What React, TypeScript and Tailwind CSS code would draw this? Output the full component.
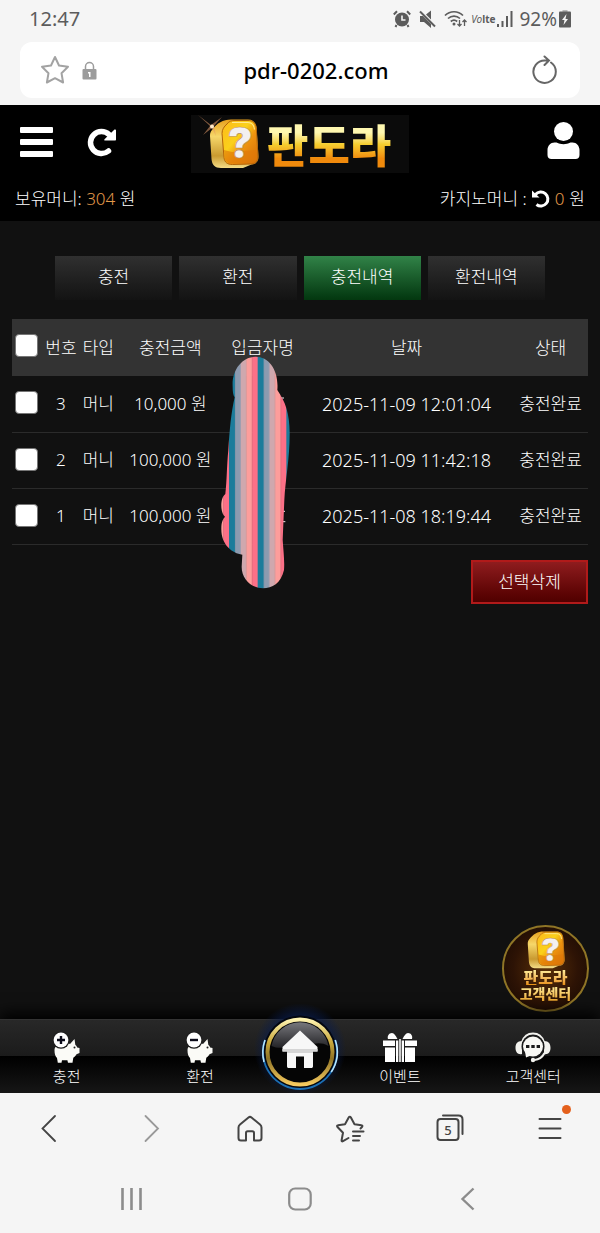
import React from 'react';

interface Deposit {
  no: number;
  type: string;
  amount: string;
  date: string;
  status: string;
}

interface NavItemProps {
  label: string;
  children: React.ReactNode;
}

const deposits: Deposit[] = [
  { no: 3, type: '머니', amount: '10,000 원', date: '2025-11-09 12:01:04', status: '충전완료' },
  { no: 2, type: '머니', amount: '100,000 원', date: '2025-11-09 11:42:18', status: '충전완료' },
  { no: 1, type: '머니', amount: '100,000 원', date: '2025-11-08 18:19:44', status: '충전완료' },
];

const tabs = ['충전', '환전', '충전내역', '환전내역'];
const activeTab = '충전내역';

const StatusIcons: React.FC = () => (
  <div className="flex items-center text-[#5c5c5c]">
    {/* alarm */}
    <svg className="mr-2 h-[18px] w-[18px]" viewBox="0 0 18 18" fill="currentColor" aria-hidden="true">
      <circle cx="9" cy="9.5" r="7" />
      <path d="M3.500 15l-1 2M14.500 15l1 2M.8 4.500L4 1.300M17.200 4.500L14 1.300" stroke="currentColor" strokeWidth="2" />
      <path d="M9 5.500V10h3.500" stroke="#f5f5f5" strokeWidth="1.600" fill="none" />
    </svg>
    {/* sound off */}
    <svg className="mr-2 h-[18px] w-[17px]" viewBox="0 0 17 18" fill="currentColor" aria-hidden="true">
      <path d="M1 6h3l8 8v4l-7-6H1zM7 4.500L12 .500v9z" />
      <path d="M1 1.500l15 15" stroke="currentColor" strokeWidth="2" />
    </svg>
    {/* wifi */}
    <svg className="mr-1 h-[18px] w-[23px]" viewBox="0 0 23 18" fill="none" stroke="currentColor" strokeWidth="1.700" aria-hidden="true">
      <path d="M1 5.500C6 .5 14 .5 19 5.500M4 8.500c3.500-3.300 8.500-3.300 12 0M6.800 11.500c2-1.800 4.400-1.800 6.400 0" />
      <circle cx="10" cy="14" r="1.500" fill="currentColor" stroke="none" />
      <path d="M15.500 10v6m-2-2l2 2 2-2M20.500 16v-6m-2 2l2-2 2 2" strokeWidth="1.300" />
    </svg>
    <span className="mr-0.5 text-[10px] leading-5">
      <i>Vo</i>
      <b>lte</b>
    </span>
    {/* signal */}
    <svg className="mr-1.5 h-[18px] w-4" viewBox="0 0 16 18" fill="currentColor" aria-hidden="true">
      <path d="M0 14h2v3H0zM4.500 11h2v6h-2zM9 6h2v11H9zM13.500 1h2v16h-2z" />
    </svg>
    <span className="text-[19px] leading-5">92%</span>
    {/* battery */}
    <svg className="ml-0.5 h-[18px] w-3" viewBox="0 0 12 18" fill="currentColor" aria-hidden="true">
      <path d="M3.500 0h5v2h-5z" opacity=".4" />
      <rect y="1.500" width="12" height="16" rx="1" />
      <path d="M7.500 4L3 10h2.500L4.500 15 9 9H6.500z" fill="#f5f5f5" />
    </svg>
  </div>
);

const GoldCube: React.FC<{ id: string; className?: string }> = ({ id, className = '' }) => (
  <svg className={`overflow-visible ${className}`} viewBox="0 0 50 50" aria-hidden="true">
    <defs>
      <linearGradient id={`${id}-side`} x1="0" y1="0" x2="0" y2="1">
        <stop offset="0" stopColor="#e8a01c" />
        <stop offset=".35" stopColor="#f6d76a" />
        <stop offset=".75" stopColor="#c99a30" />
        <stop offset="1" stopColor="#f4dc86" />
      </linearGradient>
      <linearGradient id={`${id}-face`} x1="0" y1="0" x2="1" y2="1">
        <stop offset="0" stopColor="#fdb91b" />
        <stop offset=".4" stopColor="#fbd11a" />
        <stop offset=".6" stopColor="#ee930f" />
        <stop offset="1" stopColor="#d06a08" />
      </linearGradient>
    </defs>
    <path d="M3 11C8 4 14 .5 22 .5h17c5 0 8 3 8.500 8l2 29c0 5-3 8-7 8L34 49H12c-6 0-9-3-9.500-9L1 17c0-3 .5-4 2-6z" fill={`url(#${id}-side)`} />
    <path d="M18 5c2-3 5-3.500 8-3.500h13c5 0 8 3 8.300 8l1.700 28c0 5-2.500 7.500-6.500 7.500l-19 .500c-5 0-8-2-8.500-7l-2-24c0-4 2-7 5-9.500z" fill={`url(#${id}-face)`} stroke="#b36408" strokeWidth="1" />
    <path d="M15 31l8 2 24-2 1 7c0 4-3 6-6 6l-18 .5c-5 0-8-2-8.500-6z" fill="#e07a08" opacity=".65" />
    <path d="M23 3.500h16c4 0 6 2.500 6.500 7" fill="none" stroke="#ffe98f" strokeWidth="1.200" />
    <text x="31" y="39" textAnchor="middle" fontFamily="Inter, sans-serif" fontWeight="900" fontSize="42" fill="#f3f0f0" stroke="#b98a5c" strokeWidth=".6">
      ?
    </text>
  </svg>
);

const PiggyIcon: React.FC<{ minus?: boolean }> = ({ minus }) => (
  <svg className="h-[31px] w-[27px]" viewBox="0 0 27 31" aria-hidden="true">
    <path d="M1.500 18c0-4 5-7 10-7 2 0 4 .3 5.500 1L21.500 7l.8 5.800c1 .8 1.500 1.700 1.900 2.700L26.500 16v5l-3 1.200c-.8 1.500-1.800 2.600-3.200 3.500l-.8 5H15l-.6-2.500H9L8.500 30.700H4.800L4 26c-1.800-1.800-2.500-4.500-2.500-8z" fill="#fbfbf7" />
    <circle cx="8" cy="8" r="8.700" fill="#1f1f1f" />
    <circle cx="8" cy="8" r="7.400" fill="#fff" />
    <path d={minus ? 'M4 8h8' : 'M4 8h8M8 4v8'} stroke="#0c0c1a" strokeWidth="2.400" />
    <circle cx="21.500" cy="15.500" r="1" fill="#222" />
  </svg>
);

const GiftIcon: React.FC = () => (
  <svg className="h-[31px] w-[34px]" viewBox="0 0 34 31" fill="#fff" aria-hidden="true">
    <path d="M5 7C4 4 6 1 9 1c2 0 4 3 5.500 6zM29 7c1-3-1-6-4-6-2 0-4 3-5.500 6zM0 8.500h12V14H0zM22 8.500h12V14H22zM2 15.500h10V30H2zM22 15.500h10V30H22zM13 8.500h2.300V30H13zM18.700 8.500H21V30h-2.300z" />
    <path d="M16 7h2v23h-2z" fill="#ccc" />
  </svg>
);

const SupportIcon: React.FC = () => (
  <svg className="h-[31px] w-9" viewBox="0 0 36 31" aria-hidden="true">
    <path d="M7 10C9 4 13 1.500 18 1.500S27 4 29 10" fill="none" stroke="#f2f2ee" strokeWidth="1.800" />
    <path d="M7 9C2 9 .5 12 .5 16S3 23 7 22zM29 9c5 0 6.500 3 6.500 7S33 23 29 22z" fill="#f2f2ee" />
    <circle cx="18" cy="14.500" r="11.500" fill="#1a1a1a" />
    <circle cx="18" cy="14.500" r="10" fill="#f8f8f4" />
    <path d="M10 19l1 6.500 7-3z" fill="#f8f8f4" />
    <path d="M29.500 21c-2 4-5 6.500-10 7" fill="none" stroke="#f2f2ee" strokeWidth="2" />
    <circle cx="18" cy="28" r="2.200" fill="#f2f2ee" />
    <path d="M11 13h3.400v3H11zM16.300 13h3.400v3h-3.400zM21.600 13H25v3h-3.400z" fill="#1a1a1a" />
  </svg>
);

const HomeMedal: React.FC = () => (
  <svg className="h-24 w-24" viewBox="0 0 96 96" aria-hidden="true">
    <defs>
      <radialGradient id="medal-glow">
        <stop offset=".6" stopColor="#0a1c4a" />
        <stop offset="1" stopColor="#0a1c4a" stopOpacity="0" />
      </radialGradient>
      <linearGradient id="medal-gold" x1="0" y1="0" x2="0" y2="1">
        <stop offset="0" stopColor="#fff3b0" />
        <stop offset=".35" stopColor="#c9a83c" />
        <stop offset=".6" stopColor="#8f7426" />
        <stop offset="1" stopColor="#f5c95e" />
      </linearGradient>
      <linearGradient id="medal-gloss" x1="0" y1="0" x2="0" y2="1">
        <stop offset="0" stopColor="#77777c" />
        <stop offset="1" stopColor="#232326" />
      </linearGradient>
    </defs>
    <circle cx="48" cy="45" r="46" fill="url(#medal-glow)" />
    <circle cx="48" cy="48" r="36.500" fill="#04070f" />
    <path d="M13 36A37 37 0 0 0 48 85 37 37 0 0 0 83 36" fill="none" stroke="#1b6fb5" strokeWidth="1.800" />
    <path d="M13 36a37 37 0 0 0-1 22M83.300 36a37 37 0 0 1-4 32" fill="none" stroke="#b9e6ff" strokeWidth="1.500" />
    <circle cx="48" cy="48" r="32.500" fill="#050505" stroke="url(#medal-gold)" strokeWidth="4" />
    <path d="M19.500 42A29 29 0 0 1 76.500 42C66 36 58 42 48 42S28 46 19.500 42z" fill="url(#medal-gloss)" />
    <path d="M48 26.500L30.500 43v4.500H35V62c0 1.500.5 2 2 2h7V52.500h8V64h7c1.500 0 2-.5 2-2V47.500h4.500V43z" fill="#f7f7f7" />
    <path d="M30.500 45v2.500H35V49h26v-1.500h4.500V45z" fill="#d5d5d5" />
  </svg>
);

// Marker strokes that cover the depositor names
const NameMask: React.FC = () => (
  <svg className="pointer-events-none absolute top-[37px] left-[36%] h-[233px] w-[73px]" viewBox="56 48 219 699" aria-hidden="true">
    <defs>
      <pattern id="stripes" patternUnits="userSpaceOnUse" x="86" y="0" width="86" height="800">
        <rect width="19" height="800" fill="#1c7c9b" />
        <rect x="18" width="18" height="800" fill="#8c9bb0" />
        <rect x="35" width="18" height="800" fill="#cfa8ae" />
        <rect x="52" width="18" height="800" fill="#fd9d9b" />
        <rect x="69" width="17" height="800" fill="#fc7087" />
      </pattern>
    </defs>
    <path d="M240 174h11M246 514h8M246 545h9" stroke="#eee" strokeWidth="3" />
    <path
      d="M97 140C94 90 125 51 165 50S236 90 231 150C255 185 268 220 268 280C268 360 255 420 252 480L247 600C250 640 253 665 251 690C242 730 215 745 188 745C150 744 124 715 124 680L126 644C95 640 62 615 63 565C63 545 68 537 74 530C60 520 58 475 75 462C80 420 79 380 84 330C88 270 92 220 103 172C98 165 97 155 97 140Z"
      fill="url(#stripes)"
    />
  </svg>
);

const NavItem: React.FC<NavItemProps> = ({ label, children }) => (
  <a href="#" className="flex flex-col items-center gap-[3px] pt-3 pb-[7px]">
    {children}
    <span className="text-[15px] leading-5 font-light">{label}</span>
  </a>
);

const checkboxClass = 'block h-[23px] w-[23px] appearance-none rounded-[4px] border border-[#767676] bg-white';

const App: React.FC = () => {
  return (
    <div className="flex min-h-screen flex-col bg-[#111] font-['Noto_Sans','Noto_Sans_CJK_KR',sans-serif] text-[17px] text-white">
      {/* Phone status bar and address bar */}
      <div className="bg-[#f5f5f5] pb-[7px]">
        <div className="flex h-[38px] items-center justify-between px-[29px]">
          <span className="text-[20px] leading-5 text-[#5c5c5c]">12:47</span>
          <StatusIcons />
        </div>
        <div className="mx-5 mt-1 flex h-14 items-center justify-between rounded-[12px] bg-white px-5">
          <div className="flex w-24 items-center gap-3">
            <button type="button" aria-label="북마크">
              <svg className="h-[30px] w-[30px]" viewBox="0 0 30 30" fill="none" stroke="#a3a3a3" strokeWidth="2" strokeLinejoin="round" aria-hidden="true">
                <path d="M15 2l4 8.500 9 1.200-6.500 6.500 1.600 9.300L15 23.200l-8.100 4.300 1.600-9.300L2 11.700l9-1.200z" />
              </svg>
            </button>
            <svg className="h-[19px] w-[15px]" viewBox="0 0 15 19" aria-hidden="true">
              <path d="M3.500 9V5.500a4 4 0 0 1 8 0V9" fill="none" stroke="#9c9c9c" strokeWidth="1.500" />
              <rect x=".5" y="8" width="14" height="10.500" rx="1" fill="#9c9c9c" />
              <path d="M6 11h2.500v5H7v-3.500H6z" fill="#fff" />
            </svg>
          </div>
          <span className="text-[22px] leading-6 font-medium text-black">pdr-0202.com</span>
          <div className="flex w-16 justify-end">
            <button type="button" aria-label="새로고침">
              <svg className="h-[30px] w-[30px]" viewBox="0 0 30 30" fill="none" stroke="#666" strokeWidth="2" strokeLinecap="round" aria-hidden="true">
                <path d="M21 7.500A11.200 11.200 0 1 1 15 5.500h4M14.500 1.500l4.500 4-4.500 4.500" />
              </svg>
            </button>
          </div>
        </div>
      </div>

      {/* Site header */}
      <header className="bg-black pt-2.5 pb-2.5">
        <div className="grid grid-cols-[1fr_auto_1fr] items-center px-5">
          <div className="flex items-center gap-[34px] pb-1">
            <button type="button" aria-label="메뉴">
              <svg className="h-[30px] w-[33px]" viewBox="0 0 33 30" fill="#fff" aria-hidden="true">
                <rect y="0" width="33" height="6" rx="1" />
                <rect y="12" width="33" height="6" rx="1" />
                <rect y="24" width="33" height="6" rx="1" />
              </svg>
            </button>
            <button type="button" aria-label="새로고침">
              <svg className="h-[29px] w-[29px]" viewBox="0 0 29 29" aria-hidden="true">
                <path d="M21.500 23A11 11 0 1 1 22 6.500" fill="none" stroke="#fff" strokeWidth="5.500" strokeLinecap="round" />
                <path d="M18 12.500c-.8 0-1-.8-.5-1.300L27 2c.8-.8 2-.5 2 .6v8.900c0 .7-.4 1-1 1z" fill="#fff" />
              </svg>
            </button>
          </div>
          <a href="#" className="flex h-[58px] w-[218px] items-center bg-[#0b0b0b] pl-[18px]">
            <div className="relative">
              <GoldCube id="logo" className="h-[50px] w-[50px]" />
              <svg className="absolute -top-2 -left-4 h-10 w-10" viewBox="0 0 40 40" aria-hidden="true">
                <path d="M5 4l13 10L29 6l-8 9 2 10-4-8-9 7 7-9z" fill="#e39a6a" opacity=".55" />
                <circle cx="19" cy="15.500" r="2" fill="#ffe9c9" />
              </svg>
            </div>
            <span className="ml-2 bg-gradient-to-b from-[#fff8b0] from-30% via-[#f5cf30] via-50% to-[#f08a0c] to-75% bg-clip-text font-['Noto_Sans_CJK_KR',sans-serif] text-[45px] leading-[58px] font-black text-transparent">
              판도라
            </span>
          </a>
          <div className="flex justify-end pb-2">
            <button type="button" aria-label="내 정보">
              <svg className="h-[37px] w-[33px]" viewBox="0 0 33 37" fill="#fff" aria-hidden="true">
                <circle cx="16.500" cy="9.500" r="9.500" />
                <path d="M7.500 20.500h2c4.500 2.200 9.500 2.200 14 0h2c4 0 7 3.500 7 7.500v5c0 2.500-1.500 4-4 4h-24c-2.500 0-4-1.500-4-4v-5c0-4 3-7.500 7-7.500z" />
              </svg>
            </button>
          </div>
        </div>
        <div className="mt-3.5 flex justify-between px-[15px] leading-6 font-light">
          <p>
            보유머니: <span className="text-[#e39a4b]">304</span> 원
          </p>
          <p className="flex items-center gap-[5px]">
            카지노머니 :
            <button type="button" aria-label="카지노머니 새로고침">
              <svg className="h-[18px] w-[18px]" viewBox="0 0 18 18" aria-hidden="true">
                <path d="M3.500 4.500A7 7 0 1 1 4.500 14.500" fill="none" stroke="#fff" strokeWidth="3" />
                <path d="M0 .5v7h7.500z" fill="#fff" />
              </svg>
            </button>
            <span className="text-[#e39a4b]">0</span>
            <span>원</span>
          </p>
        </div>
      </header>

      <main className="relative flex-1 px-3 pt-[35px] pb-28">
        <div className="mx-[43px] grid grid-cols-4 gap-[7px]">
          {tabs.map((tab) => (
            <button
              key={tab}
              type="button"
              className={`h-11 bg-gradient-to-b pb-0.5 font-light ${
                tab === activeTab ? 'from-[#318348] to-[#03370f]' : 'from-[#303030] to-[#131313]'
              }`}
            >
              {tab}
            </button>
          ))}
        </div>

        <div className="relative mt-[19px]">
          <table className="w-full table-fixed text-center leading-6 font-light whitespace-nowrap">
            <colgroup>
              <col className="w-[5%]" />
              <col className="w-[7%]" />
              <col className="w-[6%]" />
              <col className="w-[19%]" />
              <col className="w-[13%]" />
              <col className="w-[37%]" />
              <col className="w-[13%]" />
            </colgroup>
            <thead>
              <tr className="h-[57px] bg-[#333]">
                <th className="pb-1 pl-[3px]">
                  <input type="checkbox" aria-label="전체 선택" className={checkboxClass} />
                </th>
                <th className="font-light">번호</th>
                <th className="font-light">타입</th>
                <th className="font-light">충전금액</th>
                <th className="font-light">입금자명</th>
                <th className="font-light">날짜</th>
                <th className="font-light">상태</th>
              </tr>
            </thead>
            <tbody>
              {deposits.map((row) => (
                <tr key={row.no} className="h-14 border-b border-[#2b2b2b]">
                  <td className="pb-0.5 pl-[3px]">
                    <input type="checkbox" aria-label={`${row.no}번 선택`} className={checkboxClass} />
                  </td>
                  <td>{row.no}</td>
                  <td>{row.type}</td>
                  <td>{row.amount}</td>
                  <td></td>
                  <td className="text-lg leading-6">{row.date}</td>
                  <td>{row.status}</td>
                </tr>
              ))}
            </tbody>
          </table>
          <NameMask />
        </div>

        <div className="mt-[15px] flex justify-end">
          <button type="button" className="h-11 w-[117px] border-2 border-[#b11a1a] bg-gradient-to-b from-[#8f1c1e] to-[#500000] font-light">
            선택삭제
          </button>
        </div>

        <a
          href="#"
          className="absolute right-[11px] bottom-[7px] flex h-[87px] w-[87px] flex-col items-center rounded-full border-2 border-[#8f7526] bg-[radial-gradient(circle,#5a3008_0%,#2d1305_55%,#140802_100%)] pt-1 font-['Noto_Sans_CJK_KR',sans-serif] font-black"
        >
          <GoldCube id="badge" className="h-[38px] w-[40px]" />
          <span className="block bg-gradient-to-b from-[#fff3a0] to-[#e8900f] bg-clip-text text-base leading-4 text-transparent">판도라</span>
          <span className="block bg-gradient-to-b from-[#fff3a0] to-[#efa72a] bg-clip-text text-sm leading-4 text-transparent">고객센터</span>
        </a>
      </main>

      {/* Site navigation */}
      <nav className="relative grid grid-cols-[2fr_2fr_1fr_2fr_2fr] border-t border-[#333] bg-[linear-gradient(#282828,#1b1b1b_50%,#000_50%,#161616)] shadow-[0_-6px_14px_#000]">
        <NavItem label="충전">
          <PiggyIcon />
        </NavItem>
        <NavItem label="환전">
          <PiggyIcon minus />
        </NavItem>
        <div className="relative">
          <a href="#" aria-label="홈" className="absolute -top-4 left-1/2 block w-24 -translate-x-1/2">
            <HomeMedal />
          </a>
        </div>
        <NavItem label="이벤트">
          <GiftIcon />
        </NavItem>
        <NavItem label="고객센터">
          <SupportIcon />
        </NavItem>
      </nav>

      {/* Browser toolbar */}
      <div className="relative grid h-[72px] grid-cols-6 place-items-center bg-[#f5f5f5] text-[#444]">
        <button type="button" aria-label="뒤로">
          <svg className="h-8 w-8" viewBox="0 0 32 32" fill="none" stroke="currentColor" strokeWidth="1.800" strokeLinecap="round" aria-hidden="true">
            <path d="M21 3L8.500 15.500 21 28" />
          </svg>
        </button>
        <button type="button" aria-label="앞으로" className="text-[#999]">
          <svg className="h-8 w-8" viewBox="0 0 32 32" fill="none" stroke="currentColor" strokeWidth="1.800" strokeLinecap="round" aria-hidden="true">
            <path d="M11.500 3L24 15.500 11.500 28" />
          </svg>
        </button>
        <button type="button" aria-label="홈페이지">
          <svg className="h-8 w-8" viewBox="0 0 32 32" fill="none" stroke="currentColor" strokeWidth="2" strokeLinejoin="round" aria-hidden="true">
            <path d="M14.500 4.500c1-.8 2-.8 3 0l8.500 7c1 .8 1.500 1.600 1.500 3V25c0 1.700-.8 2.500-2.500 2.500h-5V20c0-1.200-.6-1.700-1.700-1.700h-4.600c-1.100 0-1.700.5-1.700 1.700v7.500H7c-1.700 0-2.500-.8-2.500-2.500V14.500c0-1.400.5-2.200 1.500-3z" />
          </svg>
        </button>
        <button type="button" aria-label="북마크 목록">
          <svg className="h-8 w-8" viewBox="0 0 32 32" fill="none" stroke="currentColor" strokeWidth="2" strokeLinejoin="round" strokeLinecap="round" aria-hidden="true">
            <path d="M14.500 25l-5.500 3.200c-1 .5-1.600 0-1.400-1l1.400-7.500-5.500-5.700c-.8-.8-.5-1.700.5-1.800l7-1L14.700 4.500c.6-1 1.600-1 2.200 0l3.600 6.700 7 1c1 .1 1.300 1 .5 1.800l-1.500 1.500M19 18.500h10.500M19 23h7M19 27.500h6" />
          </svg>
        </button>
        <button type="button" aria-label="탭" className="relative h-8 w-8">
          <svg className="h-8 w-8" viewBox="0 0 32 32" fill="none" stroke="currentColor" strokeWidth="2" strokeLinecap="round" aria-hidden="true">
            <rect x="3.500" y="6" width="21" height="21" rx="3" />
            <path d="M9 2.500h15.500c2.500 0 4 1.500 4 4V21" />
          </svg>
          <span className="absolute top-2 left-[3px] w-[22px] text-center text-[13px] leading-[18px] font-medium">5</span>
        </button>
        <button type="button" aria-label="브라우저 메뉴" className="relative">
          <svg className="h-8 w-8" viewBox="0 0 32 32" fill="none" stroke="currentColor" strokeWidth="2" strokeLinecap="round" aria-hidden="true">
            <path d="M5.500 6h21M5.500 15.500h21M5.500 25h21" />
          </svg>
          <span className="absolute -top-2 left-7 h-[9px] w-[9px] rounded-full bg-[#e4601c]" />
        </button>
      </div>

      {/* Phone keys */}
      <div className="grid h-[68px] grid-cols-3 place-items-center bg-[#f5f5f5] px-12 text-[#8c8c8c]">
        <button type="button" aria-label="최근 앱">
          <svg className="h-6 w-6" viewBox="0 0 24 24" stroke="currentColor" strokeWidth="2.600" aria-hidden="true">
            <path d="M2.500 1v22M11.500 1v22M20.500 1v22" />
          </svg>
        </button>
        <button type="button" aria-label="홈 화면">
          <svg className="h-6 w-6" viewBox="0 0 24 24" fill="none" stroke="currentColor" strokeWidth="2.200" aria-hidden="true">
            <rect x="1.200" y="1.500" width="21.500" height="21" rx="6" />
          </svg>
        </button>
        <button type="button" aria-label="이전">
          <svg className="h-6 w-6" viewBox="0 0 24 24" fill="none" stroke="currentColor" strokeWidth="2.400" aria-hidden="true">
            <path d="M17.500 1.500L6.500 12l11 10.500" />
          </svg>
        </button>
      </div>
    </div>
  );
};

export default App;
